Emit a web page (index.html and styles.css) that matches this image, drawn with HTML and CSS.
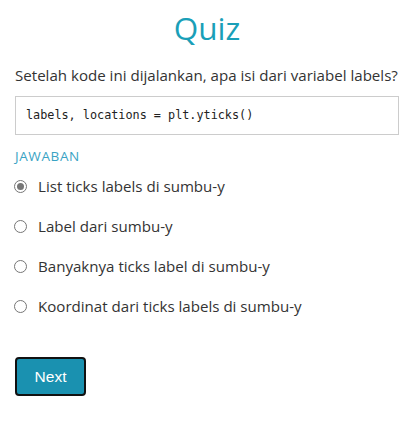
FILE: index.html
```html
<!DOCTYPE html>
<html>
<head>
<meta charset="utf-8">
<link rel="stylesheet" href="styles.css">
</head>
<body>
<div class="quiz">
  <h1 class="title">Quiz</h1>
  <p class="question">Setelah kode ini dijalankan, apa isi dari variabel labels?</p>
  <pre class="code">labels, locations = plt.yticks()</pre>
  <div class="answers-label">JAWABAN</div>
  <div class="options">
    <label class="option"><span class="radio checked"></span><span>List ticks labels di sumbu-y</span></label>
    <label class="option"><span class="radio"></span><span>Label dari sumbu-y</span></label>
    <label class="option"><span class="radio"></span><span>Banyaknya ticks label di sumbu-y</span></label>
    <label class="option"><span class="radio"></span><span>Koordinat dari ticks labels di sumbu-y</span></label>
  </div>
  <button class="next">Next</button>
</div>
</body>
</html>
```
FILE: styles.css
```css
html, body {
  margin: 0;
  padding: 0;
  background: #fff;
}
body {
  font-family: "Open Sans", "Noto Sans", sans-serif;
  color: #333;
}
.quiz {
  width: 384px;
  margin-left: 15px;
  display: flex;
  flex-direction: column;
}
.title {
  margin: 4px 0 0;
  text-align: center;
  font-size: 31.5px;
  font-weight: 500;
  line-height: 48px;
  color: #1a9fb8;
}
.question {
  margin: 12px 0 0;
  font-size: 15.1px;
  line-height: 22px;
  color: #333;
  white-space: nowrap;
}
.code {
  margin: 10px 0 0;
  border: 1px solid #ccc;
  padding: 0 10px;
  height: 37px;
  line-height: 37px;
  font-family: "DejaVu Sans Mono", monospace;
  font-size: 11.8px;
  color: #222;
}
.answers-label {
  margin-top: 12px;
  font-size: 13.5px;
  letter-spacing: 0.6px;
  line-height: 18px;
  color: #3aa3c4;
}
.options {
  margin-top: 10px;
  display: flex;
  flex-direction: column;
  gap: 18px;
}
.option {
  display: flex;
  align-items: center;
  gap: 11px;
  font-size: 15.1px;
  line-height: 22px;
  color: #333;
}
.radio {
  width: 11px;
  height: 11px;
  border: 1px solid #767676;
  border-radius: 50%;
  margin-left: -1px;
  flex: none;
  position: relative;
}
.radio.checked::after {
  content: "";
  position: absolute;
  left: 2px;
  top: 2px;
  width: 7px;
  height: 7px;
  border-radius: 50%;
  background: #767676;
}
.next {
  align-self: flex-start;
  margin-top: 40px;
  width: 71px;
  height: 39px;
  background: #1a91b0;
  border: 2px solid #111;
  border-radius: 4px;
  color: #fff;
  font-family: "Liberation Sans", Arial, sans-serif;
  font-size: 15.5px;
}
```
